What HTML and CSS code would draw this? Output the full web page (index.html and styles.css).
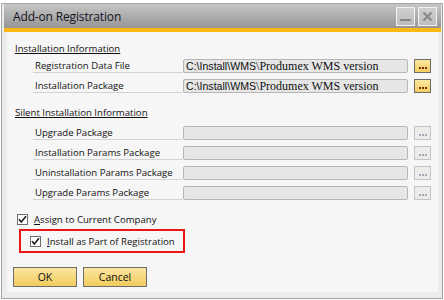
FILE: index.html
```html
<!DOCTYPE html>
<html>
<head>
<meta charset="utf-8">
<title>Add-on Registration</title>
<link rel="stylesheet" href="styles.css">
</head>
<body>
<div class="window">
  <div class="titlebar">
    <span class="title">Add-on Registration</span>
    <div class="tb-buttons">
      <span class="tb-btn"><span class="min-glyph"></span></span>
      <span class="tb-btn">
        <svg width="11" height="11" viewBox="0 0 11 11"><path d="M1.5 1.5 L9.5 9.5 M9.5 1.5 L1.5 9.5" stroke="#8a8a8a" stroke-width="2.4"/></svg>
      </span>
    </div>
  </div>
  <div class="body">
    <div class="content">
      <div class="section-title">Installation Information</div>
      <div class="row">
        <div class="label">Registration Data File</div>
        <div class="field"><span class="sans">C:\Install\WMS</span><span class="serif">\Produmex WMS version</span></div>
        <div class="browse"><span class="dots"></span></div>
      </div>
      <div class="row">
        <div class="label">Installation Package</div>
        <div class="field"><span class="sans">C:\Install\WMS</span><span class="serif">\Produmex WMS version</span></div>
        <div class="browse"><span class="dots"></span></div>
      </div>

      <div class="section-title second">Silent Installation Information</div>
      <div class="row">
        <div class="label">Upgrade Package</div>
        <div class="field"></div>
        <div class="browse disabled"><span class="dots"></span></div>
      </div>
      <div class="row">
        <div class="label">Installation Params Package</div>
        <div class="field"></div>
        <div class="browse disabled"><span class="dots"></span></div>
      </div>
      <div class="row">
        <div class="label">Uninstallation Params Package</div>
        <div class="field"></div>
        <div class="browse disabled"><span class="dots"></span></div>
      </div>
      <div class="row">
        <div class="label">Upgrade Params Package</div>
        <div class="field"></div>
        <div class="browse disabled"><span class="dots"></span></div>
      </div>

      <div class="check-row first-check">
        <span class="checkbox"><svg width="9" height="9" viewBox="0 0 9 9"><path d="M1 4.2 L3.3 7 L8 1.2" fill="none" stroke="#1e1e1e" stroke-width="1.6"/></svg></span>
        <span class="check-label"><u>A</u>ssign to Current Company</span>
      </div>
      <div class="highlight">
        <div class="check-row">
          <span class="checkbox"><svg width="9" height="9" viewBox="0 0 9 9"><path d="M1 4.2 L3.3 7 L8 1.2" fill="none" stroke="#1e1e1e" stroke-width="1.6"/></svg></span>
          <span class="check-label"><u>I</u>nstall as Part of Registration</span>
        </div>
      </div>

      <div class="actions">
        <button class="btn">OK</button>
        <button class="btn">Cancel</button>
      </div>
    </div>
  </div>
</div>
</body>
</html>
```

FILE: styles.css
```css
* { box-sizing: border-box; }
html, body { margin: 0; padding: 0; }
body {
  width: 444px;
  height: 300px;
  background: #ffffff;
  overflow: hidden;
  font-family: "Open Sans", "Noto Sans", sans-serif;
  color: #111111;
}
.window {
  margin: 3px 0 0 1px;
  width: 442px;
  height: 296px;
  border: 1px solid #a4a4a4;
  background: #ececec;
  display: flex;
  flex-direction: column;
}
.titlebar {
  margin: 0 1px 0 2px;
  height: 28px;
  border-bottom: 4px solid #f9b814;
  background: linear-gradient(#c6c6c6, #959595);
  display: flex;
  align-items: center;
  justify-content: space-between;
  padding: 0 4px 0 9px;
}
.title {
  font-size: 12px;
  color: #141424;
  letter-spacing: -0.15px;
}
.tb-buttons { display: flex; gap: 3px; }
.tb-btn {
  width: 19px;
  height: 19px;
  border: 1px solid #f2f2f2;
  background: linear-gradient(#cfcfcf, #bdbdbd);
  display: flex;
  align-items: center;
  justify-content: center;
}
.min-glyph {
  width: 11px;
  height: 2px;
  background: #858585;
  margin-top: 8px;
}
.body {
  flex: 1;
  padding: 0 4px 6px 5px;
  display: flex;
}
.content {
  flex: 1;
  background: #f6f6f6;
  padding: 9px 0 0 8px;
  font-size: 9.6px;
}
.section-title {
  height: 15px;
  line-height: 15px;
  text-decoration: underline;
  text-underline-offset: 1px;
}
.section-title.second { margin-top: 9px; margin-bottom: 3px; }
.row {
  height: 20px;
  display: flex;
  align-items: center;
  padding-left: 18px;
}
.label {
  width: 150px;
  height: 17px;
  align-self: flex-start;
  padding: 4px 0 0 2px;
  line-height: 12px;
  border-bottom: 1px solid #d2d2d2;
  white-space: nowrap;
}
.field {
  width: 225px;
  height: 14px;
  border: 1px solid #b6b6b6;
  border-radius: 2px;
  background: #e6e6e6;
  padding-left: 2px;
  line-height: 12px;
  white-space: nowrap;
  overflow: hidden;
}
.sans { font-family: "Liberation Sans", sans-serif; font-size: 10.6px; }
.serif { font-family: "Liberation Serif", serif; font-size: 12px; }
.browse {
  margin-left: 6px;
  width: 17px;
  height: 14px;
  border: 1px solid #6c6c6c;
  background: linear-gradient(#fbe7a0, #f4cf60);
  display: flex;
  justify-content: center;
  align-items: flex-end;
  padding-bottom: 3px;
}
.dots {
  width: 2px;
  height: 2px;
  margin-right: 6px;
  background: #7a2e08;
  box-shadow: 3px 0 0 #7a2e08, 6px 0 0 #7a2e08;
}
.browse.disabled {
  border-color: #c4c4c4;
  background: #ececec;
}
.browse.disabled .dots {
  background: #a8a8b8;
  box-shadow: 3px 0 0 #a8a8b8, 6px 0 0 #a8a8b8;
}
.check-row {
  display: flex;
  align-items: center;
  height: 19px;
  white-space: nowrap;
}
.first-check { margin-top: 7px; padding-left: 2px; }
.checkbox {
  width: 11px;
  height: 11px;
  border: 1px solid #6e6e6e;
  background: #ffffff;
  display: flex;
  align-items: center;
  justify-content: center;
  margin-right: 6px;
  flex: none;
}
.highlight {
  margin-left: 4px;
  width: 166px;
  height: 24px;
  border: 2px solid #ea1616;
  padding: 0 0 0 9px;
  display: flex;
  align-items: center;
}
.actions {
  margin-top: 14px;
  margin-left: -2px;
  display: flex;
  gap: 6px;
}
.btn {
  width: 64px;
  height: 20px;
  border: 1px solid #6e6e6e;
  background: linear-gradient(#fbe5a0, #f2cb5c);
  font-family: "Open Sans", "Noto Sans", sans-serif;
  font-size: 10.5px;
  color: #111111;
  padding: 0;
  line-height: 18px;
}
```
